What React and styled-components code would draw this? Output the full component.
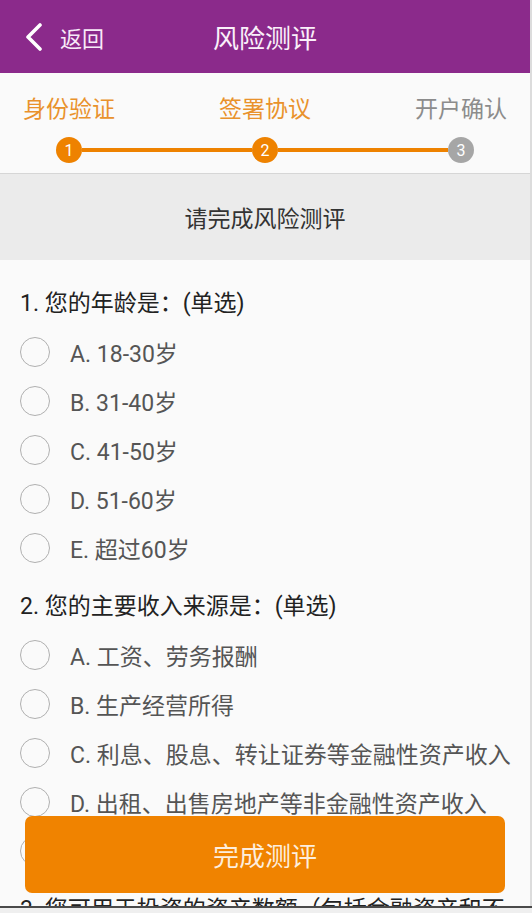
import React, { useState } from 'react';
import styled, { createGlobalStyle } from 'styled-components';

const GlobalStyle = createGlobalStyle`
  html, body {
    margin: 0;
    padding: 0;
    background: #fafafa;
  }
  body {
    font-family: Roboto, "Noto Sans CJK SC", "Noto Sans", sans-serif;
  }
`;

const steps = [
  { label: '身份验证', done: true },
  { label: '签署协议', done: true },
  { label: '开户确认', done: false },
];

const questions = [
  {
    title: '1. 您的年龄是：(单选)',
    options: ['A. 18-30岁', 'B. 31-40岁', 'C. 41-50岁', 'D. 51-60岁', 'E. 超过60岁'],
  },
  {
    title: '2. 您的主要收入来源是：(单选)',
    options: [
      'A. 工资、劳务报酬',
      'B. 生产经营所得',
      'C. 利息、股息、转让证券等金融性资产收入',
      'D. 出租、出售房地产等非金融性资产收入',
      'E. 无固定收入',
    ],
  },
  {
    title: '3. 您可用于投资的资产数额（包括金融资产和不动产）为：(单选)',
    options: ['A. 不超过50万元', 'B. 50万-300万元', 'C. 300万-1000万元', 'D. 1000万元以上'],
  },
];

const App = () => {
  const [answers, setAnswers] = useState({});

  const pick = (q, o) => {
    setAnswers({ ...answers, [q]: o });
  };

  return (
    <>
      <GlobalStyle />
      <Page>
        {/* 헤더 */}
        <Header>
          <BackButton>
            <svg width="20" height="28" viewBox="0 0 20 28">
              <path
                d="M16 2 L4 14 L16 26"
                fill="none"
                stroke="#fff"
                strokeWidth="3.6"
                strokeLinecap="round"
                strokeLinejoin="round"
              />
            </svg>
            <span>返回</span>
          </BackButton>
          <Title>风险测评</Title>
        </Header>

        {/* stepper */}
        <Stepper>
          <StepLabels>
            {steps.map((s) => (
              <StepLabel key={s.label} $done={s.done}>
                {s.label}
              </StepLabel>
            ))}
          </StepLabels>
          <Track>
            <Dot $done>1</Dot>
            <Line />
            <Dot $done>2</Dot>
            <Line />
            <Dot>3</Dot>
          </Track>
        </Stepper>

        <Notice>请完成风险测评</Notice>

        <QuestionList>
          {questions.map((q, qi) => (
            <Question key={q.title}>
              <QuestionTitle>{q.title}</QuestionTitle>
              {q.options.map((o, oi) => (
                <Option key={o} onClick={() => pick(qi, oi)}>
                  <Radio $checked={answers[qi] === oi} />
                  <OptionText>{o}</OptionText>
                </Option>
              ))}
            </Question>
          ))}
        </QuestionList>

        <SubmitButton>完成测评</SubmitButton>
        <BottomEdge />
      </Page>
    </>
  );
};

export default App;

const Page = styled.div`
  width: 530px;
  min-height: 913px;
  background: #fafafa;
  border-right: 2px solid #dcdcdc;
  padding-bottom: 120px;
`;

const Header = styled.div`
  height: 73px;
  background: #8b2a8b;
  display: flex;
  align-items: center;
  justify-content: center;
  position: relative;
`;

const BackButton = styled.div`
  position: absolute;
  left: 24px;
  top: 0;
  height: 73px;
  display: flex;
  align-items: center;
  gap: 16px;
  color: #f8eaf8;
  font-size: 22px;
`;

const Title = styled.div`
  color: #faf0fa;
  font-size: 26px;
`;

const Stepper = styled.div`
  height: 101px;
  background: #fafafa;
  border-bottom: 1px solid #d6d6d6;
  box-sizing: border-box;
  padding-top: 23px;
`;

const StepLabels = styled.div`
  display: flex;
  justify-content: space-between;
`;

const StepLabel = styled.div`
  width: 138px;
  text-align: center;
  font-size: 23px;
  line-height: 28px;
  color: ${(p) => (p.$done ? '#e9922c' : '#8c8c8c')};
`;

const Track = styled.div`
  display: flex;
  align-items: center;
  padding: 0 56px 0 56px;
  margin-top: 13px;
`;

const Dot = styled.div`
  width: 26px;
  height: 26px;
  border-radius: 50%;
  background: ${(p) => (p.$done ? '#ee8200' : '#a6a6a6')};
  color: #fff;
  font-size: 16px;
  display: flex;
  align-items: center;
  justify-content: center;
  flex-shrink: 0;
`;

const Line = styled.div`
  flex: 1;
  height: 4px;
  background: #ee8200;
`;

const Notice = styled.div`
  height: 86px;
  background: #ebebeb;
  display: flex;
  align-items: center;
  justify-content: center;
  font-size: 23px;
  color: #333;
`;

const QuestionList = styled.div`
  padding: 29px 4px 0 20px;
`;

const Question = styled.div`
  margin-bottom: 20px;
`;

const QuestionTitle = styled.div`
  font-size: 23px;
  line-height: 30px;
  color: #222;
  margin-bottom: 8px;
`;

const Option = styled.div`
  display: flex;
  align-items: center;
  height: 49px;
  gap: 20px;
  cursor: pointer;
`;

const Radio = styled.div`
  width: 28px;
  height: 28px;
  border-radius: 50%;
  border: 1.5px solid #b0b0b0;
  flex-shrink: 0;
  background: ${(p) => (p.$checked ? '#ee8200' : 'transparent')};
`;

const OptionText = styled.div`
  font-size: 23px;
  color: #555;
  white-space: nowrap;
`;

const SubmitButton = styled.button`
  position: fixed;
  left: 25px;
  bottom: 20px;
  width: 480px;
  height: 77px;
  border: none;
  border-radius: 7px;
  background: #f08300;
  color: #fdeedd;
  font-size: 26px;
  font-family: Roboto, "Noto Sans CJK SC", sans-serif;
`;

const BottomEdge = styled.div`
  position: fixed;
  left: 0;
  bottom: 0;
  width: 532px;
  height: 5px;
  background: #efefef;
  border-top: 2px solid #4a4a4a;
`;
